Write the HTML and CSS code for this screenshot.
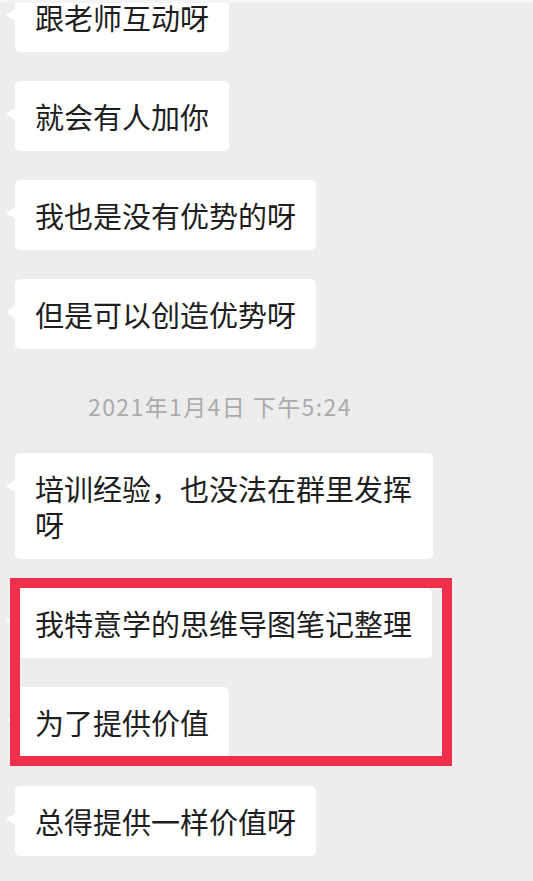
FILE: index.html
```html
<!DOCTYPE html>
<html lang="zh-CN">
<head>
<meta charset="utf-8">
<title>聊天记录</title>
<link rel="stylesheet" href="styles.css">
</head>
<body>
<div class="topline"></div>
<main class="chat">
  <div class="bubble">跟老师互动呀</div>
  <div class="bubble">就会有人加你</div>
  <div class="bubble">我也是没有优势的呀</div>
  <div class="bubble">但是可以创造优势呀</div>
  <div class="time">2021年1月4日 下午5:24</div>
  <div class="bubble">培训经验，也没法在群里发挥呀</div>
  <div class="highlight">
    <div class="bubble">我特意学的思维导图笔记整理</div>
    <div class="bubble">为了提供价值</div>
  </div>
  <div class="bubble">总得提供一样价值呀</div>
</main>
</body>
</html>
```
FILE: styles.css
```css
html, body {
  margin: 0;
  padding: 0;
}
body {
  width: 533px;
  height: 881px;
  overflow: hidden;
  background: #ededed;
  font-family: "Noto Sans CJK SC", "Noto Sans", sans-serif;
  position: relative;
}
.topline {
  position: absolute;
  top: 0;
  left: 0;
  right: 0;
  height: 3px;
  background: #f4f4f4;
  z-index: 2;
}
.chat {
  display: flex;
  flex-direction: column;
  align-items: flex-start;
  gap: 29px;
  margin-top: -18px;
  padding-left: 15px;
}
.bubble {
  position: relative;
  box-sizing: border-box;
  max-width: 418px;
  padding: 17px 20px;
  background: #ffffff;
  border-radius: 5px;
  color: #1e1e1e;
  font-size: 29px;
  line-height: 36px;
}
.bubble::before {
  content: "";
  position: absolute;
  left: -9px;
  top: 27px;
  width: 0;
  height: 0;
  border-top: 6px solid transparent;
  border-bottom: 6px solid transparent;
  border-right: 9px solid #ffffff;
}
.time {
  margin: 13px 0 3px 73px;
  color: #ababab;
  font-size: 23px;
  line-height: 30px;
  letter-spacing: 1.4px;
}
.highlight {
  position: relative;
  display: flex;
  flex-direction: column;
  align-items: flex-start;
  gap: 29px;
}
.highlight::after {
  content: "";
  position: absolute;
  left: -5px;
  top: -10px;
  bottom: -9px;
  width: 442px;
  box-sizing: border-box;
  border: 10px solid #f0304b;
  pointer-events: none;
}
```
